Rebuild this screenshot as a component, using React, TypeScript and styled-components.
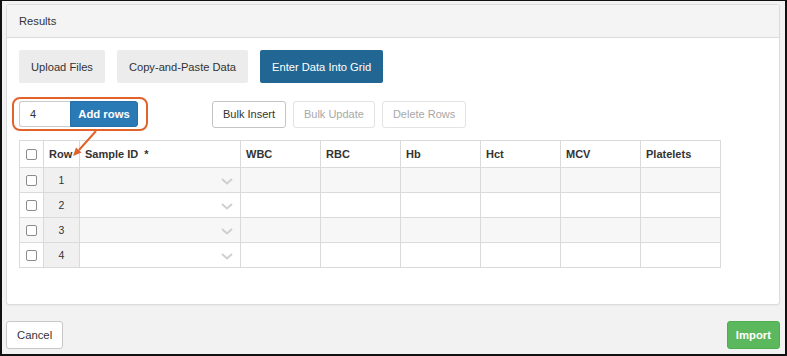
import React from "react";
import styled, { createGlobalStyle } from "styled-components";

const GlobalStyle = createGlobalStyle`
  html, body {
    margin: 0;
    padding: 0;
  }
  body {
    font-family: "Liberation Sans", Arial, sans-serif;
    font-size: 11px;
    color: #333;
  }
  * {
    box-sizing: border-box;
  }
`;

const Frame = styled("div")`
  width: 787px;
  height: 356px;
  background: #f2f2f2;
  border-style: solid;
  border-color: #111;
  border-width: 1px 2px 2px 2px;
  padding: 3px 5px 0 4px;
  display: flex;
  flex-direction: column;
`;

const Panel = styled("section")`
  height: 301px;
  background: #fff;
  border: 1px solid #dcdcdc;
  border-radius: 3px;
  display: flex;
  flex-direction: column;
  box-shadow: 0 1px 1px rgba(0, 0, 0, 0.04);
`;

const PanelHeader = styled("header")`
  height: 33px;
  flex: 0 0 33px;
  background: #f4f4f4;
  border-bottom: 1px solid #dcdcdc;
  border-radius: 3px 3px 0 0;
  padding: 0 12px;
  display: flex;
  align-items: center;
  font-size: 11.2px;
`;

const PanelBody = styled("div")`
  position: relative;
  flex: 1;
  padding: 12px 12px 0 12px;
`;

const Tabs = styled("div")`
  display: flex;
  gap: 12px;
  height: 33px;
`;

const Tab = styled("button")<{ $active?: boolean }>`
  height: 33px;
  padding: 0 12px;
  border: none;
  border-radius: 2px;
  font-family: inherit;
  font-size: 11.15px;
  background: ${(p) => (p.$active ? "#226794" : "#ececec")};
  color: ${(p) => (p.$active ? "#fff" : "#333")};
  cursor: pointer;
`;

const Toolbar = styled("div")`
  display: flex;
  align-items: center;
  margin-top: 18px;
  height: 26px;
`;

const InputGroup = styled("div")`
  display: flex;
  height: 26px;
`;

const CountInput = styled("input")`
  width: 51px;
  height: 26px;
  border: 1px solid #ccc;
  border-right: none;
  border-radius: 3px 0 0 3px;
  padding: 0 10px;
  font-family: inherit;
  font-size: 11px;
  color: #333;
  outline: none;
`;

const AddButton = styled("button")`
  width: 68px;
  height: 26px;
  border: 1px solid #2570a8;
  border-radius: 0 3px 3px 0;
  background: #2a7ab5;
  color: #fff;
  font-family: inherit;
  font-size: 11.3px;
  font-weight: bold;
`;

const ActionButton = styled("button")<{ $disabled?: boolean }>`
  height: 27px;
  padding: 0 10px;
  background: #fff;
  border: 1px solid ${(p) => (p.$disabled ? "#e3e3e3" : "#c4c4c4")};
  border-radius: 3px;
  font-family: inherit;
  font-size: 11px;
  color: ${(p) => (p.$disabled ? "#a8a8a8" : "#333")};
  margin-right: 7px;
`;

const ActionGroup = styled("div")`
  display: flex;
  margin-left: 74px;
`;

const Highlight = styled("div")`
  position: absolute;
  left: 5px;
  top: 59px;
  width: 136px;
  height: 34px;
  border: 2px solid #e2622b;
  border-radius: 8px;
  pointer-events: none;
`;

const Pointer = styled("svg")`
  position: absolute;
  left: 63px;
  top: 91px;
  pointer-events: none;
`;

const Grid = styled("table")`
  margin-top: 13px;
  border-collapse: collapse;
  table-layout: fixed;
  width: 701px;
`;

const HeadCell = styled("th")<{ $center?: boolean }>`
  height: 27px;
  border: 1px solid #dadada;
  padding: 0 5px;
  text-align: ${(p) => (p.$center ? "center" : "left")};
  font-weight: bold;
  font-size: 11px;
  color: #333;
  background: #fff;
`;

const Row = styled("tr")<{ $striped?: boolean }>`
  background: ${(p) => (p.$striped ? "#f7f7f7" : "#fff")};
`;

const Cell = styled("td")<{ $kind?: "check" | "num" | "select" }>`
  height: 25px;
  border: 1px solid #dadada;
  padding: 0;
  font-size: 10.5px;
  text-align: ${(p) => (p.$kind === "check" || p.$kind === "num" ? "center" : "left")};
  background: ${(p) => (p.$kind === "num" ? "#f0f0f0" : "inherit")};
`;

const SelectBox = styled("div")`
  display: flex;
  justify-content: flex-end;
  align-items: center;
  padding: 3px 7px 0 0;
  height: 100%;
`;

const Check = styled("span")`
  display: inline-block;
  width: 11px;
  height: 11px;
  border: 1px solid #8c8c8c;
  border-radius: 2px;
  background: #fff;
  vertical-align: middle;
`;

const Footer = styled("footer")`
  display: flex;
  justify-content: space-between;
  margin-top: 16px;
`;

const FooterButton = styled("button")<{ $primary?: boolean }>`
  height: 28px;
  padding: 0 ${(p) => (p.$primary ? "8px" : "10px")};
  border-radius: 3px;
  font-family: inherit;
  font-size: 11.3px;
  font-weight: ${(p) => (p.$primary ? "bold" : "normal")};
  background: ${(p) => (p.$primary ? "#5cb85c" : "#fff")};
  border: 1px solid ${(p) => (p.$primary ? "#4fae4f" : "#c8c8c8")};
  color: ${(p) => (p.$primary ? "#fff" : "#333")};
`;

const columns = ["WBC", "RBC", "Hb", "Hct", "MCV", "Platelets"];

function Chevron() {
  return (
    <svg width="12" height="7" viewBox="0 0 12 7">
      <polyline points="1,1 6,5.5 11,1" fill="none" stroke="#cfcfcf" strokeWidth="2" />
    </svg>
  );
}

export default function App() {
  return (
    <>
      <GlobalStyle />
      <Frame>
        <Panel>
          <PanelHeader>Results</PanelHeader>
          <PanelBody>
            <Tabs>
              <Tab>Upload Files</Tab>
              <Tab>Copy-and-Paste Data</Tab>
              <Tab $active>Enter Data Into Grid</Tab>
            </Tabs>
            <Toolbar>
              <InputGroup>
                <CountInput defaultValue="4" />
                <AddButton>Add rows</AddButton>
              </InputGroup>
              <ActionGroup>
                <ActionButton>Bulk Insert</ActionButton>
                <ActionButton $disabled>Bulk Update</ActionButton>
                <ActionButton $disabled>Delete Rows</ActionButton>
              </ActionGroup>
            </Toolbar>
            <Grid>
              <colgroup>
                <col style={{ width: 24 }} />
                <col style={{ width: 36 }} />
                <col style={{ width: 161 }} />
                {columns.map((c) => (
                  <col key={c} style={{ width: 80 }} />
                ))}
              </colgroup>
              <thead>
                <tr>
                  <HeadCell $center>
                    <Check />
                  </HeadCell>
                  <HeadCell>Row</HeadCell>
                  <HeadCell>Sample ID &nbsp;*</HeadCell>
                  {columns.map((c) => (
                    <HeadCell key={c}>{c}</HeadCell>
                  ))}
                </tr>
              </thead>
              <tbody>
                {[1, 2, 3, 4].map((n) => (
                  <Row key={n} $striped={n % 2 === 1}>
                    <Cell $kind="check">
                      <Check />
                    </Cell>
                    <Cell $kind="num">{n}</Cell>
                    <Cell $kind="select">
                      <SelectBox>
                        <Chevron />
                      </SelectBox>
                    </Cell>
                    {columns.map((c) => (
                      <Cell key={c} />
                    ))}
                  </Row>
                ))}
              </tbody>
            </Grid>
            <Highlight />
            <Pointer width="32" height="32" viewBox="0 0 32 32">
              <line x1="26" y1="2" x2="9" y2="21" stroke="#e2622b" strokeWidth="2" />
              <polygon points="3,27 11.5,23.5 6,18.5" fill="#e2622b" />
            </Pointer>
          </PanelBody>
        </Panel>
        <Footer>
          <FooterButton>Cancel</FooterButton>
          <FooterButton $primary>Import</FooterButton>
        </Footer>
      </Frame>
    </>
  );
}
